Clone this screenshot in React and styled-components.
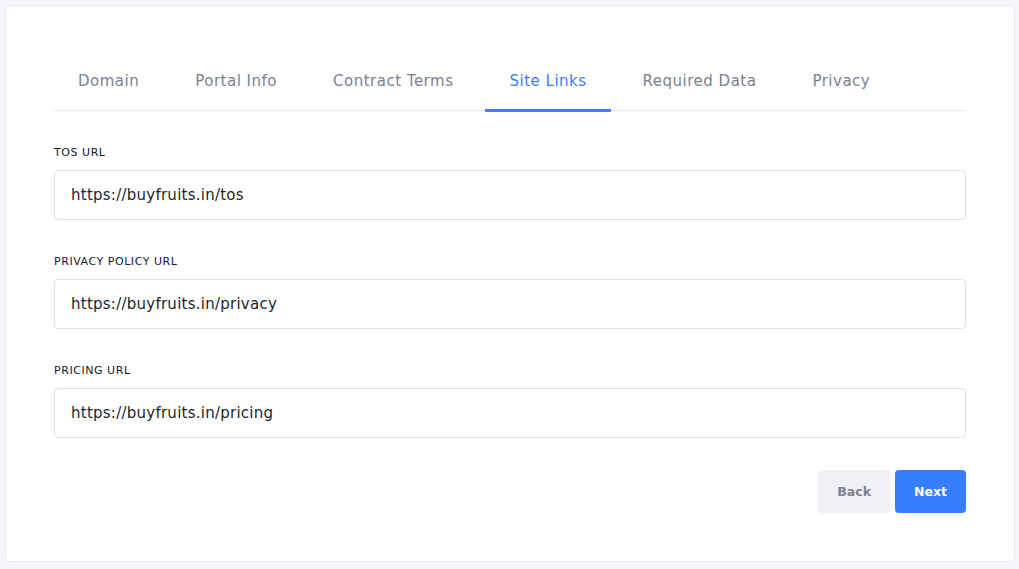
import React, { useState } from "react";
import styled, { createGlobalStyle } from "styled-components";

const GlobalStyle = createGlobalStyle`
  html, body {
    margin: 0;
    padding: 0;
    background: #f5f6fa;
    font-family: "DejaVu Sans", "Liberation Sans", sans-serif;
  }
  * { box-sizing: border-box; }
`;

const tabs = ["Domain", "Portal Info", "Contract Terms", "Site Links", "Required Data", "Privacy"];

const fields = [
  { label: "TOS URL", value: "https://buyfruits.in/tos" },
  { label: "PRIVACY POLICY URL", value: "https://buyfruits.in/privacy" },
  { label: "PRICING URL", value: "https://buyfruits.in/pricing" },
];

const App = () => {
  const [active, setActive] = useState("Site Links");

  return (
    <Page>
      <GlobalStyle />
      <Card>
        <TabBar>
          {tabs.map((t) => (
            <Tab key={t} $active={t === active} onClick={() => setActive(t)}>
              {t}
            </Tab>
          ))}
        </TabBar>

        <Form>
          {fields.map((f) => (
            <Field key={f.label}>
              <Label>{f.label}</Label>
              <Input defaultValue={f.value} />
            </Field>
          ))}
        </Form>

        <Actions>
          <Button>Back</Button>
          <Button $primary>Next</Button>
        </Actions>
      </Card>
    </Page>
  );
};

const Page = styled.div`
  padding: 5px 4px 7px 5px;
`;

const Card = styled.div`
  background: #fff;
  border: 1px solid #e6e7ef;
  border-radius: 5px;
  padding: 45px 48px 48px 48px;
`;

const TabBar = styled.div`
  display: flex;
  border-bottom: 1px solid #e8e9f1;
  height: 60px;
`;

const Tab = styled.div`
  padding: 19px 24px 16px;
  margin-right: 8px;
  font-size: 15px;
  line-height: 22px;
  letter-spacing: 0.5px;
  white-space: nowrap;
  color: ${(p) => (p.$active ? "#3b7dfc" : "#7b8091")};
  border-bottom: 3px solid ${(p) => (p.$active ? "#3b7dfc" : "transparent")};
  height: 61px;
  cursor: pointer;
`;

const Form = styled.div`
  display: flex;
  flex-direction: column;
  gap: 33px;
  margin-top: 33px;
`;

const Field = styled.div`
  display: flex;
  flex-direction: column;
  gap: 9px;
`;

const Label = styled.label`
  font-size: 11px;
  line-height: 17px;
  font-weight: 400;
  letter-spacing: 0.55px;
  color: #15192a;
  text-transform: uppercase;
`;

const Input = styled.input`
  height: 50px;
  border: 1px solid #dcdfe6;
  border-radius: 4px;
  padding: 0 16px;
  font-family: inherit;
  font-size: 15px;
  letter-spacing: 0.25px;
  color: #1c1f2a;
  outline: none;
`;

const Actions = styled.div`
  display: flex;
  justify-content: flex-end;
  gap: 5px;
  margin-top: 32px;
`;

const Button = styled.button`
  height: 43px;
  padding: 0 19px;
  border: none;
  border-radius: 4px;
  font-family: inherit;
  font-size: 12.5px;
  font-weight: 700;
  background: ${(p) => (p.$primary ? "#377dff" : "#f0f1f4")};
  color: ${(p) => (p.$primary ? "#fff" : "#7b8091")};
  cursor: pointer;
`;

export default App;
